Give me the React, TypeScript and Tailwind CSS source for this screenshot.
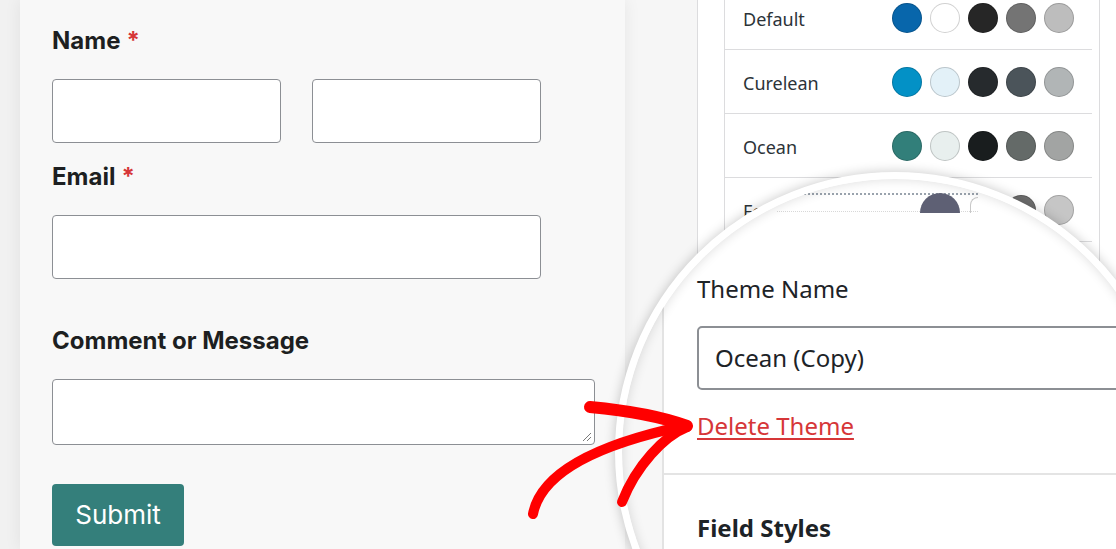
import React from "react";

const themes = [
  { name: "Default", colors: ["#0866ab", "#ffffff", "#262626", "#747474", "#bdbdbd"] },
  { name: "Curelean", colors: ["#0391c6", "#e3f1f8", "#262a2d", "#4b545a", "#b1b5b6"] },
  { name: "Ocean", colors: ["#327f7a", "#e8efee", "#191d1e", "#646a68", "#a2a4a3"] },
  { name: "Fern", colors: ["#58bb5d", "#f8fdf8", "#383838", "#6e6e6e", "#c6c6c6"] },
];

const Field = ({ className }: { className: string }) => (
  <div className={`h-[64px] rounded-[4px] border border-[#8c8f94] bg-white ${className}`} />
);

const Label = ({ text, required }: { text: string; required?: boolean }) => (
  <div className="text-[24px] leading-[32px] font-bold text-[#1d1f21]">
    {text}
    {required && <span className="ml-[6px] text-[#d63638]">*</span>}
  </div>
);

const App = () => {
  return (
    <div className="relative w-[1116px] h-[549px] overflow-hidden flex bg-[#f1f1f1] font-['Inter',sans-serif]">
      {/* left gutter */}
      <div className="w-[20px] shrink-0" />

      {/* Form preview card */}
      <div className="w-[605px] shrink-0 bg-[#f8f8f8] shadow-[0_0_16px_rgba(0,0,0,0.07)] pl-[32px] pt-[25px] z-[1]">
        <Label text="Name" required />
        <div className="mt-[22px] flex gap-[31px]">
          <Field className="w-[229px]" />
          <Field className="w-[229px]" />
        </div>
        <div className="mt-[18px]">
          <Label text="Email" required />
        </div>
        <Field className="mt-[22px] w-[489px]" />
        <div className="mt-[46px]">
          <Label text="Comment or Message" />
        </div>
        <div className="relative mt-[22px] w-[543px] h-[66px] rounded-[4px] border border-[#8c8f94] bg-white">
          <svg className="absolute right-[2px] bottom-[2px]" width="12" height="12" viewBox="0 0 12 12">
            <path d="M11 3 L3 11 M11 7 L7 11" stroke="#7a7a7a" strokeWidth="1" />
          </svg>
        </div>
        <button className="mt-[39px] w-[132px] h-[62px] rounded-[4px] bg-[#347f7b] text-white text-[26px] leading-[30px]">
          Submit
        </button>
      </div>

      {/* gap between preview and sidebar */}
      <div className="w-[72px] shrink-0 bg-[#f6f6f6]" />

      {/* Sidebar */}
      <div className="flex-1 bg-white border-l border-[#dcdcde] pl-[26px] pr-[16px] font-['Noto_Sans',sans-serif]">
        <div className="h-full border-x border-[#dcdcde] mt-[-14px]">
          {themes.map((t) => (
            <div
              key={t.name}
              className="mr-[7px] h-[64px] flex items-center justify-between border-b border-[#dcdcde] pl-[18px] pr-[18px]"
            >
              <span className="mt-[3px] text-[18px] text-[#2c3338]">{t.name}</span>
              <div className="flex gap-[8px]">
                {t.colors.map((c, i) => (
                  <span
                    key={i}
                    className="w-[30px] h-[30px] rounded-full border border-[rgba(0,0,0,0.18)]"
                    style={{ backgroundColor: c }}
                  />
                ))}
              </div>
            </div>
          ))}
        </div>
      </div>

      {/* Magnifier */}
      <div className="absolute left-[615px] top-[172px] w-[560px] h-[560px] rounded-full border-[7px] border-white overflow-hidden flex bg-white shadow-[0_0_12px_rgba(0,0,0,0.22)] z-[5] font-['Noto_Sans',sans-serif]">
        <div className="w-[42px] shrink-0 bg-[#f7f7f7] border-r-2 border-[#e3e3e3]" />
        <div className="flex-1 flex flex-col">
          <div className="relative mt-[14px] ml-[113px] w-[201px] h-[19px] border-b border-[#d8d8d8] border-t-2 border-dotted border-t-[#9aa3ad]">
            <span className="absolute left-[143px] top-[-2px] w-[40px] h-[20px] rounded-t-full bg-[#5e6074]" />
            <span className="absolute left-[193px] top-[2px] w-[8px] h-[16px] rounded-tl-full border-l border-t border-[#c8c8c8]" />
          </div>
          <div className="pl-[33px]">
            <div className="mt-[61px] text-[24px] leading-[32px] text-[#1d2327]">Theme Name</div>
            <div className="mt-[21px] w-[520px] h-[64px] rounded-[5px] border-2 border-[#8c8f94] flex items-center pl-[16px] text-[24px] text-[#1d2327]">
              Ocean (Copy)
            </div>
            <div className="mt-[20px] text-[24px] leading-[32px] text-[#d63638] underline decoration-2 underline-offset-[3px]">
              Delete Theme
            </div>
          </div>
          <div className="mt-[31px] border-t-2 border-[#e4e4e4]" />
          <div className="pl-[33px] mt-[37px] text-[24px] leading-[32px] font-bold text-[#1d2327]">Field Styles</div>
        </div>
        <div className="absolute inset-0 rounded-full shadow-[inset_0_0_12px_rgba(0,0,0,0.14)] pointer-events-none" />
      </div>

      {/* Arrow */}
      <svg className="absolute left-0 top-0 z-[10] pointer-events-none" width="1116" height="549" viewBox="0 0 1116 549">
        <g fill="none" stroke="#ff0000" strokeLinecap="round" strokeLinejoin="round">
          <path d="M533 514 C 540 478, 585 447, 684 426" strokeWidth="10" />
          <path d="M590 407 C 622 410, 660 416, 687 426" strokeWidth="12" />
          <path d="M687 427 C 664 436, 636 466, 622 502" strokeWidth="10" />
        </g>
      </svg>
    </div>
  );
};

export default App;
